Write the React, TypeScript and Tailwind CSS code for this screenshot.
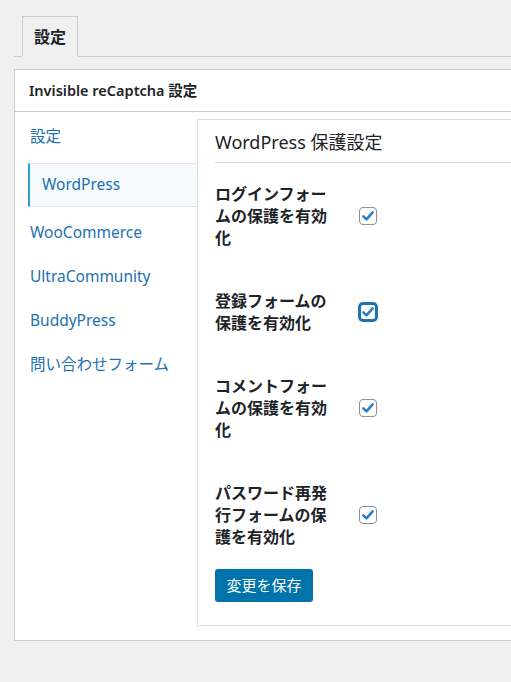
const font = { fontFamily: '"Noto Sans", "Noto Sans CJK JP", sans-serif' };

const navItems = ["設定", "WordPress", "WooCommerce", "UltraCommunity", "BuddyPress", "問い合わせフォーム"];

const rows = [
  { label: "ログインフォームの保護を有効化", focus: false },
  { label: "登録フォームの保護を有効化", focus: true },
  { label: "コメントフォームの保護を有効化", focus: false },
  { label: "パスワード再発行フォームの保護を有効化", focus: false },
];

function Check({ focus }: { focus: boolean }) {
  return (
    <span
      className={`flex h-[18px] w-[18px] items-center justify-center rounded-[4px] bg-white ${
        focus ? "border-2 border-[#2271b1] ring-1 ring-[#2271b1]" : "border border-[#8c8f94]"
      }`}
    >
      <svg width="14" height="14" viewBox="0 0 14 14">
        <path d="M2.4 7.4 L5.5 10.4 L11.6 3.4" fill="none" stroke="#2f7dc0" strokeWidth="2.6" strokeLinecap="round" strokeLinejoin="round" />
      </svg>
    </span>
  );
}

export default function App() {
  return (
    <div className="min-h-screen w-[511px] overflow-hidden bg-[#f0f0f0] text-[#1d2327]" style={font}>
      {/* タブ */}
      <div className="ml-[14px] mt-[16px] flex w-[540px] border-b border-[#ccc] pl-[8px]">
        <div className="-mb-px flex h-[41px] items-center border border-[#ccc] border-b-[#f0f0f0] bg-[#f0f0f0] px-[11px] text-[16px] font-bold">
          設定
        </div>
      </div>

      <div className="ml-[14px] mt-[12px] w-[540px] border border-[#ccc] bg-white">
        <div className="flex h-[42px] items-center border-b border-[#ccc] px-[14px] text-[14.5px] font-semibold">
          Invisible reCaptcha 設定
        </div>

        <div className="flex">
          {/* サイドナビ */}
          <div className="w-[182px] shrink-0 pt-[3px] text-[15.5px] text-[#2271b1]">
            {navItems.map((n) =>
              n === "WordPress" ? (
                <div
                  key={n}
                  className="my-[4px] ml-[13px] flex h-[44px] items-center border-y border-l-2 border-[#e5e5e5] border-l-[#2ea2cc] bg-[#f5fafd] pl-[12px]"
                >
                  {n}
                </div>
              ) : (
                <div key={n} className="flex h-[44px] items-center pl-[15px]">
                  {n}
                </div>
              )
            )}
          </div>

          {/* 設定パネル */}
          <div className="mb-[14px] mt-[7px] flex-1 border border-[#ddd] bg-white pb-[23px]">
            <div className="ml-[17px] border-b border-[#ddd] pb-[8px] pt-[10px] text-[18px] leading-[24px]">
              WordPress 保護設定
            </div>
            {rows.map((r) => (
              <div key={r.label} className="flex items-center pl-[17px] pb-[21px] pt-[20px]">
                <div className="mr-[20px] w-[124px] text-[16px] font-bold leading-[22px]">{r.label}</div>
                <Check focus={r.focus} />
              </div>
            ))}
            <button className="ml-[17px] h-[33px] w-[98px] rounded-[3px] bg-[#0073aa] text-[15px] text-white">
              変更を保存
            </button>
          </div>
        </div>
      </div>
    </div>
  );
}
